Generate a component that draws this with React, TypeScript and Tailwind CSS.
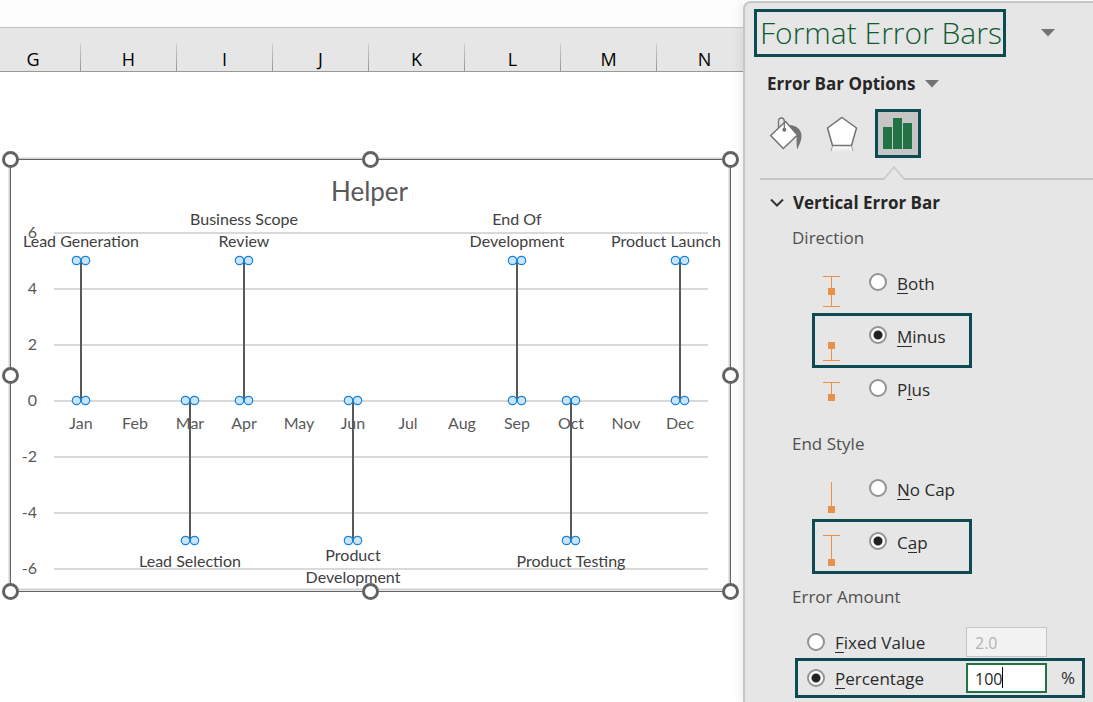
import React from "react";

const columns = ["G", "H", "I", "J", "K", "L", "M", "N"];
const months = ["Jan", "Feb", "Mar", "Apr", "May", "Jun", "Jul", "Aug", "Sep", "Oct", "Nov", "Dec"];
const ticks = [6, 4, 2, 0, -2, -4, -6];

const milestones = [
  { month: 0, value: 5, lines: ["Lead Generation"] },
  { month: 2, value: -5, lines: ["Lead Selection"] },
  { month: 3, value: 5, lines: ["Business Scope", "Review"] },
  { month: 5, value: -5, lines: ["Product", "Development"] },
  { month: 8, value: 5, lines: ["End Of", "Development"] },
  { month: 9, value: -5, lines: ["Product Testing"] },
  { month: 11, value: 5, lines: ["Product Launch"] },
];

const xOf = (month: number) => Math.floor(81 + month * 54.5);
const yOf = (value: number) => 401 - value * 28;

/** Keeps the last column's label inside the chart frame. */
const labelX = (month: number) => Math.min(xOf(month), 666);

function labelY(value: number, count: number, index: number) {
  if (value > 0) return 247 - (count - 1 - index) * 22;
  return count === 1 ? 567 : 561 + index * 22;
}

function Chart() {
  return (
    <svg
      viewBox="0 150 743 452"
      className="block w-full font-['Lato','Liberation_Sans',sans-serif]"
      role="img"
      aria-label="Helper chart"
    >
      <rect x="9.5" y="158.5" width="720" height="431" fill="none" stroke="#d0d0d0" strokeWidth="2" />
      <rect x="10.5" y="159.5" width="720" height="432" fill="none" stroke="#636363" />
      <text x="369.5" y="201" textAnchor="middle" className="fill-[#595959] text-[26px]">
        Helper
      </text>
      {ticks.map((t) => (
        <g key={t}>
          <line x1="54" x2="708" y1={yOf(t)} y2={yOf(t)} stroke="#d9d9d9" strokeWidth="2" />
          <text x="37" y={yOf(t) + 5} textAnchor="end" className="fill-[#595959] text-[16px]">
            {t}
          </text>
        </g>
      ))}
      {months.map((m, i) => (
        <text key={m} x={xOf(i)} y="429" textAnchor="middle" className="fill-[#595959] text-[16px]">
          {m}
        </text>
      ))}
      {milestones.map(({ month, value, lines }) => (
        <g key={month}>
          <line x1={xOf(month)} x2={xOf(month)} y1={yOf(0)} y2={yOf(value)} stroke="#595959" strokeWidth="2" />
          {[0, value].map((v) => (
            <g key={v} fill="#cce4f7" stroke="#1583db" strokeWidth="1.2">
              <circle cx={xOf(month) - 4.5} cy={yOf(v) - 0.5} r="4.2" />
              <circle cx={xOf(month) + 4.5} cy={yOf(v) - 0.5} r="4.2" />
            </g>
          ))}
          {lines.map((line, i) => (
            <text
              key={line}
              x={labelX(month)}
              y={labelY(value, lines.length, i)}
              textAnchor="middle"
              className="fill-[#404040] text-[16px]"
            >
              {line}
            </text>
          ))}
        </g>
      ))}
      {[
        [10.5, 159.5], [370.5, 159.5], [730.5, 159.5],
        [10.5, 375.5], [730.5, 375.5],
        [10.5, 591.5], [370.5, 591.5], [730.5, 591.5],
      ].map(([x, y]) => (
        <circle key={`${x}-${y}`} cx={x} cy={y} r="7" fill="#fff" stroke="#636363" strokeWidth="3" />
      ))}
    </svg>
  );
}

function Caret() {
  return (
    <svg width="14" height="8" viewBox="0 0 14 8" aria-hidden="true">
      <path d="M0 0H14L7 7.500Z" fill="#737373" />
    </svg>
  );
}

type BarKind = "both" | "minus" | "plus" | "nocap" | "cap";

const barShapes: Record<BarKind, { path: string; square: number }> = {
  both: { path: "M0 5.5H17M8.5 5.5V35.5M0 35.5H17", square: 17 },
  minus: { path: "M8.5 20V36.5M0 36.5H17", square: 18 },
  plus: { path: "M0 5.5H17M8.5 5.5V22", square: 17 },
  nocap: { path: "M8.5 5V34", square: 29 },
  cap: { path: "M0 5.5H17M8.5 5.5V34", square: 29 },
};

function BarIcon({ kind }: { kind: BarKind }) {
  const { path, square } = barShapes[kind];
  return (
    <svg width="17" height="40" viewBox="0 0 17 40" className="shrink-0" aria-hidden="true">
      <path d={path} stroke="#e8914a" fill="none" />
      <rect x="5" y={square} width="7" height="7" fill="#e8914a" />
    </svg>
  );
}

function Radio({ id, name, checked }: { id: string; name: string; checked?: boolean }) {
  return (
    <input
      type="radio"
      id={id}
      name={name}
      defaultChecked={checked}
      className="size-[18px] shrink-0 appearance-none rounded-full border-2 border-[#939393] bg-white checked:bg-[radial-gradient(circle,#222_4px,#fff_5px)]"
    />
  );
}

/** Label text whose access key letter is underlined. */
function KeyLabel({ id, text, at = 0 }: { id: string; text: string; at?: number }) {
  return (
    <label htmlFor={id} className="block text-[17px] leading-[26px] text-[#2b2b2b]">
      {text.slice(0, at)}
      <span className="inline-block h-[22px] border-b border-[#2b2b2b] leading-6">{text[at]}</span>
      {text.slice(at + 1)}
    </label>
  );
}

function BarOption(props: { kind: BarKind; name: string; text: string; at?: number; boxed?: boolean }) {
  const { kind, name, text, at, boxed } = props;
  return (
    <div
      className={`mb-[-2px] flex h-[55px] w-40 items-start border-[3px] pl-2 pt-2 ${
        boxed ? "border-[#0d4a52]" : "border-transparent"
      }`}
    >
      <BarIcon kind={kind} />
      <div className="ml-[29px] flex items-start gap-[10px]">
        <span className="mt-[2px] flex">
          <Radio id={kind} name={name} checked={boxed} />
        </span>
        <KeyLabel id={kind} text={text} at={at} />
      </div>
    </div>
  );
}

const legend = "text-[17px] leading-6 text-[#505050]";

function FormatPane() {
  return (
    <aside className="z-10 mt-px w-[350px] shrink-0 rounded-tl-lg border-l-2 border-t-2 border-[#c6c6c6] bg-[#e6e6e6] pt-[6px] font-['Open_Sans','Noto_Sans',sans-serif] shadow-[-4px_0_8px_rgba(0,0,0,0.05)]">
      <header className="flex items-start pl-[9px]">
        <h1 className="flex h-12 w-[252px] items-center border-[3px] border-[#0d4a52] pl-[3px] text-[30px] font-light leading-none whitespace-nowrap text-[#0f5c33]">
          Format Error Bars
        </h1>
        <button type="button" aria-label="Pane options" className="ml-[35px] mt-5">
          <Caret />
        </button>
      </header>

      <button type="button" className="ml-[22px] mt-[15px] flex items-center gap-[10px] text-[17px] font-bold leading-6 text-[#262626]">
        Error Bar Options
        <Caret />
      </button>

      <div className="mt-[13px] flex h-[49px] items-center pl-[24px]">
        <button type="button" aria-label="Fill and line" className="h-9 w-[34px]">
          <svg width="34" height="36" viewBox="0 0 34 36">
            <path d="M20 9C28 9 33 14 32.500 21C32 26 30 29 28.200 33.500C27 28 28 24 27.500 18Z" fill="#737373" />
            <path d="M16.500 5.500L28.500 19L14.300 32.500L1.700 19.500Z" fill="#fff" stroke="#737373" strokeWidth="1.500" />
            <path d="M9.500 12V5Q9.500 2 12.300 2T15.300 5V13" fill="none" stroke="#737373" strokeWidth="1.300" />
            <circle cx="15.300" cy="13.800" r="2" fill="#737373" />
          </svg>
        </button>
        <button type="button" aria-label="Effects" className="ml-[23px] h-9 w-8">
          <svg width="32" height="36" viewBox="0 0 32 36">
            <defs>
              <linearGradient id="reflection" x1="0" y1="0" x2="0" y2="1">
                <stop offset="0" stopColor="#fff" />
                <stop offset="1" stopColor="#fff" stopOpacity="0" />
              </linearGradient>
            </defs>
            <path d="M6.500 30H25.500L27 36H5Z" fill="url(#reflection)" />
            <path d="M6.500 30L5 35M25.500 30L27 35" stroke="#a5a5a5" fill="none" />
            <path d="M16 1.500L30.500 12L25.500 29.500H6.500L1.500 12Z" fill="#fff" stroke="#737373" strokeWidth="1.500" />
          </svg>
        </button>
        <button
          type="button"
          aria-label="Error bar options"
          aria-pressed="true"
          className="ml-[17px] flex h-[49px] w-[46px] items-center justify-center border-[3px] border-[#0d4a52] bg-[#c6c6c6]"
        >
          <svg width="30" height="32" viewBox="0 0 30 32">
            <path d="M0 9H9V31H0ZM10 0H19V31H10ZM20 5H29V31H20Z" fill="#217346" />
          </svg>
        </button>
      </div>

      <div className="mt-2 flex pl-[15px]">
        <span className="h-[14px] w-[124px] border-b-2 border-[#c6c6c6]" />
        <svg width="20" height="14" viewBox="0 0 20 14" aria-hidden="true">
          <path d="M0 13L10 1L20 13" fill="none" stroke="#c9c9c9" strokeWidth="1.500" />
        </svg>
        <span className="h-[14px] flex-1 border-b-2 border-[#c6c6c6]" />
      </div>

      <section>
        <button type="button" className="ml-[25px] mt-[11px] flex items-center gap-[9px] text-[17px] font-bold leading-6 text-[#262626]">
          <svg width="14" height="8" viewBox="0 0 14 8" aria-hidden="true">
            <path d="M1 0.500L7 6.500L13 0.500" fill="none" stroke="#333" strokeWidth="2" />
          </svg>
          Vertical Error Bar
        </button>

        <fieldset className="mt-[11px] pl-[47px]">
          <legend className={legend}>Direction</legend>
          <div className="ml-5 mt-[10px]">
            <BarOption kind="both" name="direction" text="Both" />
            <BarOption kind="minus" name="direction" text="Minus" boxed />
            <BarOption kind="plus" name="direction" text="Plus" at={1} />
          </div>
        </fieldset>

        <fieldset className="mt-[13px] pl-[47px]">
          <legend className={legend}>End Style</legend>
          <div className="ml-5 mt-[10px]">
            <BarOption kind="nocap" name="end" text="No Cap" />
            <BarOption kind="cap" name="end" text="Cap" at={1} boxed />
          </div>
        </fieldset>

        <fieldset className="mt-[13px]">
          <legend className={`pl-[47px] ${legend}`}>Error Amount</legend>
          <div className="ml-[50px] mt-4 flex h-[33px] w-[290px] items-center border-x-[3px] border-transparent pl-[9px]">
            <Radio id="fixed" name="amount" />
            <div className="ml-[10px] w-[131px] pt-[2px]">
              <KeyLabel id="fixed" text="Fixed Value" />
            </div>
            <input
              type="text"
              aria-label="Fixed value amount"
              defaultValue="2.0"
              disabled
              className="h-[30px] w-[81px] border border-[#c6c6c6] bg-[#f2f2f2] pl-2 pt-[2px] text-[16px] text-[#b3b3b3]"
            />
          </div>
          <div className="ml-[50px] flex h-10 w-[290px] items-center border-[3px] border-[#0d4a52] pl-[9px]">
            <Radio id="percentage" name="amount" checked />
            <div className="ml-[10px] w-[131px] pt-[2px]">
              <KeyLabel id="percentage" text="Percentage" />
            </div>
            <div className="relative">
              <input
                type="text"
                aria-label="Percentage amount"
                defaultValue="100"
                className="block h-[30px] w-[81px] border-2 border-[#217346] bg-white pl-[7px] pt-[2px] text-[16px] text-[#262626] outline-none"
              />
              <span className="absolute left-[36px] top-1 h-[21px] w-px bg-black" />
            </div>
            <span className="ml-[14px] text-[17px] text-[#2b2b2b]">%</span>
          </div>
        </fieldset>
      </section>
    </aside>
  );
}

export default function App() {
  return (
    <div className="flex min-h-screen overflow-hidden bg-white">
      <main className="min-w-0 flex-1">
        <div className="h-[27px] bg-[#fdfdfd]" />
        <div className="flex h-[45px] items-end overflow-hidden border-b border-t border-b-[#999] border-t-[#c3c3c3] bg-[#e6e6e6] font-['Open_Sans','Noto_Sans',sans-serif]">
          {columns.map((c, i) => (
            <div key={c} className={`flex shrink-0 ${i === 0 ? "w-[81px]" : "w-24"}`}>
              <span className={`flex-1 pt-1 text-center text-[18px] leading-6 text-black ${i === 0 ? "pr-[14px]" : ""}`}>{c}</span>
              <span className="h-[28px] w-px bg-linear-to-b from-[#cfcfcf] to-[#999]" />
            </div>
          ))}
        </div>
        <div className="pt-[78px]">
          <Chart />
        </div>
      </main>
      <FormatPane />
    </div>
  );
}
